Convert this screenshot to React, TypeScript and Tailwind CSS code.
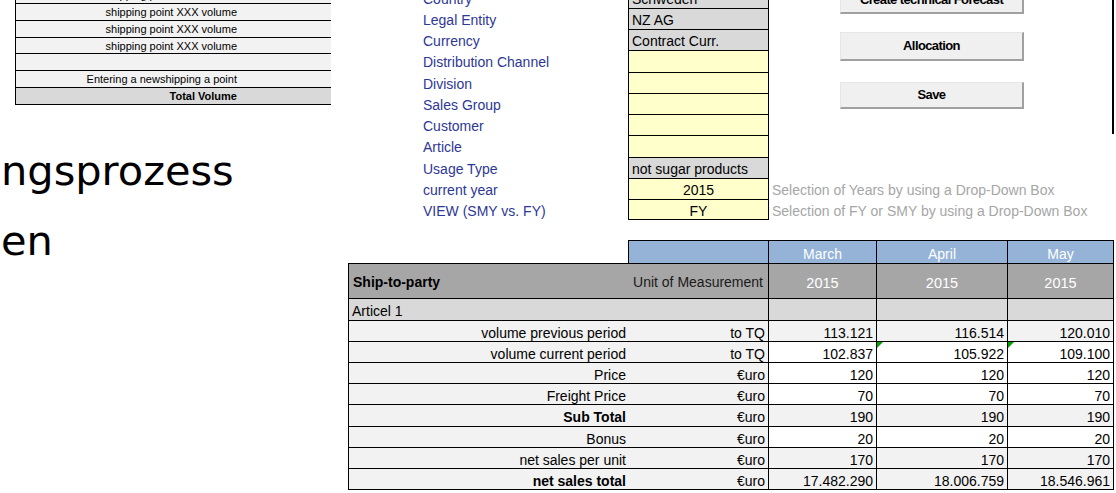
import React from 'react';

type FormRow = {
  label: string;
  value?: string;
  fill: 'gray' | 'yellow';
  center?: boolean;
  note?: string;
  h: string;
};

const formRows: FormRow[] = [
  { label: 'Country', value: 'Schweden', fill: 'gray', h: 'h-[21px]' },
  { label: 'Legal Entity', value: 'NZ AG', fill: 'gray', h: 'h-[21px]' },
  { label: 'Currency', value: 'Contract Curr.', fill: 'gray', h: 'h-[21px]' },
  { label: 'Distribution Channel', fill: 'yellow', h: 'h-[22px]' },
  { label: 'Division', fill: 'yellow', h: 'h-[21px]' },
  { label: 'Sales Group', fill: 'yellow', h: 'h-[21px]' },
  { label: 'Customer', fill: 'yellow', h: 'h-[21px]' },
  { label: 'Article', fill: 'yellow', h: 'h-[22px]' },
  { label: 'Usage Type', value: 'not sugar products', fill: 'gray', h: 'h-[21px]' },
  {
    label: 'current year',
    value: '2015',
    fill: 'yellow',
    center: true,
    note: 'Selection of Years by using a Drop-Down Box',
    h: 'h-[21px]',
  },
  {
    label: 'VIEW (SMY vs. FY)',
    value: 'FY',
    fill: 'yellow',
    center: true,
    note: 'Selection of FY or SMY by using a Drop-Down Box',
    h: 'h-[21px]',
  },
];

type DataRow = {
  label: string;
  unit: string;
  vals: string[];
  shade: boolean;
  bold?: boolean;
  marks?: boolean;
  h: string;
};

const dataRows: DataRow[] = [
  { label: 'volume previous period', unit: 'to TQ', vals: ['113.121', '116.514', '120.010'], shade: true, h: 'h-[21px]' },
  { label: 'volume current period', unit: 'to TQ', vals: ['102.837', '105.922', '109.100'], shade: false, marks: true, h: 'h-[21px]' },
  { label: 'Price', unit: '€uro', vals: ['120', '120', '120'], shade: false, h: 'h-[21px]' },
  { label: 'Freight Price', unit: '€uro', vals: ['70', '70', '70'], shade: false, h: 'h-[21px]' },
  { label: 'Sub Total', unit: '€uro', vals: ['190', '190', '190'], shade: true, bold: true, h: 'h-[22px]' },
  { label: 'Bonus', unit: '€uro', vals: ['20', '20', '20'], shade: false, h: 'h-[21px]' },
  { label: 'net sales per unit', unit: '€uro', vals: ['170', '170', '170'], shade: true, h: 'h-[21px]' },
  { label: 'net sales total', unit: '€uro', vals: ['17.482.290', '18.006.759', '18.546.961'], shade: true, bold: true, h: 'h-[21px]' },
];

const shippingRows = [
  { text: 'shipping point XXX volume', h: 'h-[17px]' },
  { text: 'shipping point XXX volume', h: 'h-[17px]' },
  { text: 'shipping point XXX volume', h: 'h-[17px]' },
  { text: 'shipping point XXX volume', h: 'h-[16px]' },
  { text: '', h: 'h-[17px]' },
  { text: 'Entering a newshipping a point', h: 'h-[17px]' },
];

function SheetButton({ label, className }: { label: string; className: string }) {
  return (
    <div
      className={`absolute left-[492px] w-[184px] flex items-center justify-center bg-[#f0f0f0] border-t border-l border-[#e6e6e6] border-r-2 border-b-2 border-r-[#a0a0a0] border-b-[#a0a0a0] text-[13px] font-bold tracking-[-0.6px] text-black ${className}`}
    >
      {label}
    </div>
  );
}

export default function App() {
  return (
    <div className="relative w-[1116px] h-[493px] overflow-hidden bg-white font-['Liberation_Sans',Arial,sans-serif] text-black">
      <div className="flex">
        {/* Left: shipping points + slide text behind */}
        <div className="w-[348px] shrink-0">
          <div className="ml-[15px] w-[316px] -mt-[14px] border-l border-black text-[11px]">
            {shippingRows.map((r, i) => (
              <div
                key={i}
                className={`${r.h} flex items-center justify-end pr-[94px] pt-[1px] bg-[#f2f2f2] border-t border-black`}
              >
                {r.text}
              </div>
            ))}
            <div className="h-[18px] flex items-center justify-end pr-[94px] pt-[1px] bg-[#d9d9d9] border-t border-b border-black font-bold">
              Total Volume
            </div>
          </div>
          <div className="mt-[31px] ml-[1px] font-['DejaVu_Sans',sans-serif] text-[41.5px] leading-[70px]">
            <div>ngsprozess</div>
            <div>en</div>
          </div>
        </div>

        {/* Right: parameters + planning table */}
        <div className="flex-1">
          <div className="relative -mt-[13px] pl-[75px] text-[14px]">
            {formRows.map((r, i) => (
              <div key={r.label} className={`flex ${r.h}`}>
                <div className="w-[205px] flex items-center pt-[3px] text-[#2e3795]">{r.label}</div>
                <div
                  className={`w-[141px] flex items-center pt-[3px] border-l border-r border-t border-black ${
                    i === formRows.length - 1 ? 'border-b' : ''
                  } ${r.fill === 'gray' ? 'bg-[#d9d9d9]' : 'bg-[#ffffcc]'} ${
                    r.center ? 'justify-center' : 'pl-[3px]'
                  }`}
                >
                  {r.value}
                </div>
                {r.note && (
                  <div className="flex items-center pt-[3px] pl-[3px] text-[#a6a6a6] whitespace-nowrap">
                    {r.note}
                  </div>
                )}
              </div>
            ))}
            <SheetButton label="Create technical Forecast" className="top-0 h-[27px]" />
            <SheetButton label="Allocation" className="top-[45px] h-[29px]" />
            <SheetButton label="Save" className="top-[95px] h-[27px]" />
          </div>

          <table className="mt-[20px] table-fixed border-collapse w-[765px] text-[14px] leading-[16px]">
            <colgroup>
              <col className="w-[280px]" />
              <col className="w-[140px]" />
              <col className="w-[108px]" />
              <col className="w-[131px]" />
              <col className="w-[106px]" />
            </colgroup>
            <tbody>
              <tr className="h-[23px]">
                <td className="p-0"></td>
                <td className="p-0 border border-black bg-[#95b3d7]"></td>
                {['March', 'April', 'May'].map((m) => (
                  <td key={m} className="p-0 pt-[3px] border border-black bg-[#95b3d7] text-center text-white">
                    {m}
                  </td>
                ))}
              </tr>
              <tr className="h-[35px]">
                <td colSpan={2} className="p-0 pt-[2px] border border-black bg-[#a6a6a6]">
                  <div className="flex justify-between items-center">
                    <span className="pl-[4px] font-bold">Ship-to-party</span>
                    <span className="pr-[5px] text-[#1a1a1a]">Unit of Measurement</span>
                  </div>
                </td>
                {[0, 1, 2].map((k) => (
                  <td key={k} className="p-0 pt-[3px] border border-black bg-[#a6a6a6] text-center text-white text-[14.5px]">
                    2015
                  </td>
                ))}
              </tr>
              <tr className="h-[22px]">
                <td colSpan={2} className="p-0 pt-[3px] pl-[3px] border border-black bg-[#d9d9d9]">
                  Articel 1
                </td>
                {[0, 1, 2].map((k) => (
                  <td key={k} className="p-0 border border-black bg-[#d9d9d9]"></td>
                ))}
              </tr>
              {dataRows.map((r) => (
                <tr key={r.label} className={r.h}>
                  <td colSpan={2} className="p-0 pt-[3px] border border-black bg-[#f2f2f2]">
                    <div className="flex">
                      <span className={`w-[280px] text-right pr-[3px] ${r.bold ? 'font-bold' : ''}`}>{r.label}</span>
                      <span className="flex-1 text-right pr-[3px]">{r.unit}</span>
                    </div>
                  </td>
                  {r.vals.map((v, k) => (
                    <td
                      key={k}
                      className={`relative p-0 pt-[3px] pr-[3px] border border-black text-right ${
                        r.shade ? 'bg-[#f2f2f2]' : 'bg-white'
                      }`}
                    >
                      {r.marks && k > 0 && (
                        <svg className="absolute left-0 top-0" width="6" height="6" viewBox="0 0 6 6">
                          <polygon points="0,0 6,0 0,6" fill="#00a000" />
                        </svg>
                      )}
                      {v}
                    </td>
                  ))}
                </tr>
              ))}
            </tbody>
          </table>
        </div>
      </div>

      {/* frame edge on the right */}
      <div className="absolute left-[1112px] top-0 w-[2px] h-[134px] bg-black"></div>
    </div>
  );
}
